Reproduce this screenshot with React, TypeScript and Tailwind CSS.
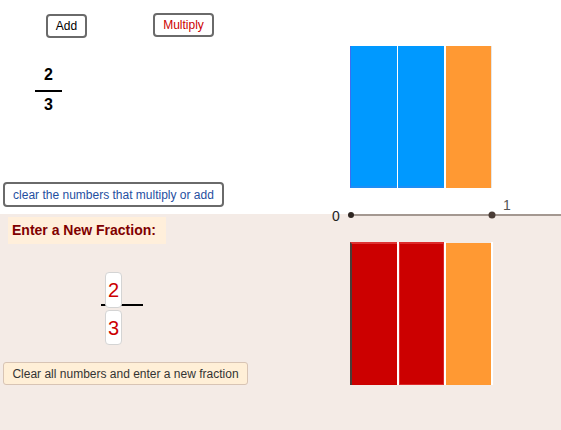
import React from 'react';

const font = { fontFamily: '"Liberation Sans", Arial, sans-serif' };

const TopBars: React.FC = () => (
  <div className="flex h-[142px] mt-[46px] bg-white">
    <div className="w-[47px] h-full bg-[#0099ff] border-l border-[#3d6df0] border-b-2 border-b-[#1e8ef5]"></div>
    <div className="w-[46px] h-full ml-[1px] bg-[#0099ff] border-b-2 border-[#1e8ef5]"></div>
    <div className="w-[46px] h-full ml-[2px] bg-[#ff9933] border-r border-[#e6e6e6]"></div>
  </div>
);

const BottomBars: React.FC = () => (
  <div className="flex h-[143px] mt-[28px] bg-white pr-[2px] self-start">
    <div className="w-[47px] h-full bg-[#cc0000] border-l-2 border-[#4a3d38] border-t-2 border-t-[#dd3333]"></div>
    <div className="w-[45px] h-full ml-[2px] bg-[#cc0000] border border-[#dd2a2a] border-t-2"></div>
    <div className="w-[45px] h-full ml-[2px] bg-[#ff9933] border-t border-t-[#f4ebe6]"></div>
  </div>
);

export default function App() {
  return (
    <div className="relative w-[561px] h-[430px] overflow-hidden" style={font}>
      {/* top area */}
      <div className="flex h-[214px] bg-white">
        <div className="flex flex-col w-[350px] pt-[13px] pb-[7px]">
          <div className="flex items-start pl-[46px] gap-[66px]">
            <button className="mt-[1px] w-[41px] h-[24px] border-2 border-[#6a6a6a] rounded-[4px] bg-white text-[12px] text-black leading-none">
              Add
            </button>
            <button className="w-[61px] h-[24px] border-2 border-[#6a6a6a] rounded-[4px] bg-white text-[12px] text-[#cc0000] leading-none">
              Multiply
            </button>
          </div>

          <div className="ml-[35px] w-[27px] mt-[28px] flex flex-col items-center text-[16px] font-bold text-black">
            <div className="h-[18px] leading-[18px]">2</div>
            <div className="mt-[6px] h-[2px] w-full bg-black"></div>
            <div className="mt-[4px] h-[18px] leading-[18px]">3</div>
          </div>

          <button className="mt-auto ml-[3px] w-[221px] h-[25px] border-2 border-[#6a6a6a] rounded-[4px] bg-white text-[12px] text-[#1f4f9f] leading-none">
            clear the numbers that multiply or add
          </button>
        </div>
        <TopBars />
      </div>

      {/* bottom area */}
      <div className="flex h-[216px] bg-[#f4ebe6]">
        <div className="flex flex-col w-[350px] pt-[3px]">
          <div className="ml-[8px] w-[158px] h-[27px] bg-[#ffefdb] pl-[4px] flex items-center text-[14px] font-bold text-[#800000]">
            Enter a New Fraction:
          </div>

          <div className="relative ml-[101px] w-[42px] mt-[28px]">
            <div className="absolute left-0 top-[32px] w-[42px] h-[2px] bg-black"></div>
            <div className="relative ml-[4px] w-[17px] h-[36px] bg-white border border-[#d4d4d4] rounded-[4px] flex items-center justify-center text-[20px] text-[#cc0000]">
              2
            </div>
            <div className="relative ml-[4px] mt-[2px] w-[17px] h-[35px] bg-white border border-[#d4d4d4] rounded-[4px] flex items-center justify-center text-[20px] text-[#cc0000]">
              3
            </div>
          </div>

          <button className="mt-[17px] ml-[3px] w-[245px] h-[23px] bg-[#ffefd7] border border-[#d8c4b4] rounded-[3px] text-[12px] text-[#333] leading-none">
            Clear all numbers and enter a new fraction
          </button>
        </div>
        <BottomBars />
      </div>

      {/* number line drawn over the boundary */}
      <svg className="absolute left-0 top-0 pointer-events-none" width="561" height="430">
        <line x1="351" y1="215" x2="561" y2="215" stroke="#8a7d75" strokeWidth="1.5" />
        <circle cx="351" cy="215" r="3" fill="#2e2622" />
        <circle cx="492" cy="215" r="3.5" fill="#4a3c36" />
        <text x="332" y="221" fontSize="14" fill="#222" fontFamily="Liberation Sans, Arial, sans-serif">0</text>
        <text x="503" y="210" fontSize="14" fill="#555" fontFamily="Liberation Sans, Arial, sans-serif">1</text>
      </svg>
    </div>
  );
}
